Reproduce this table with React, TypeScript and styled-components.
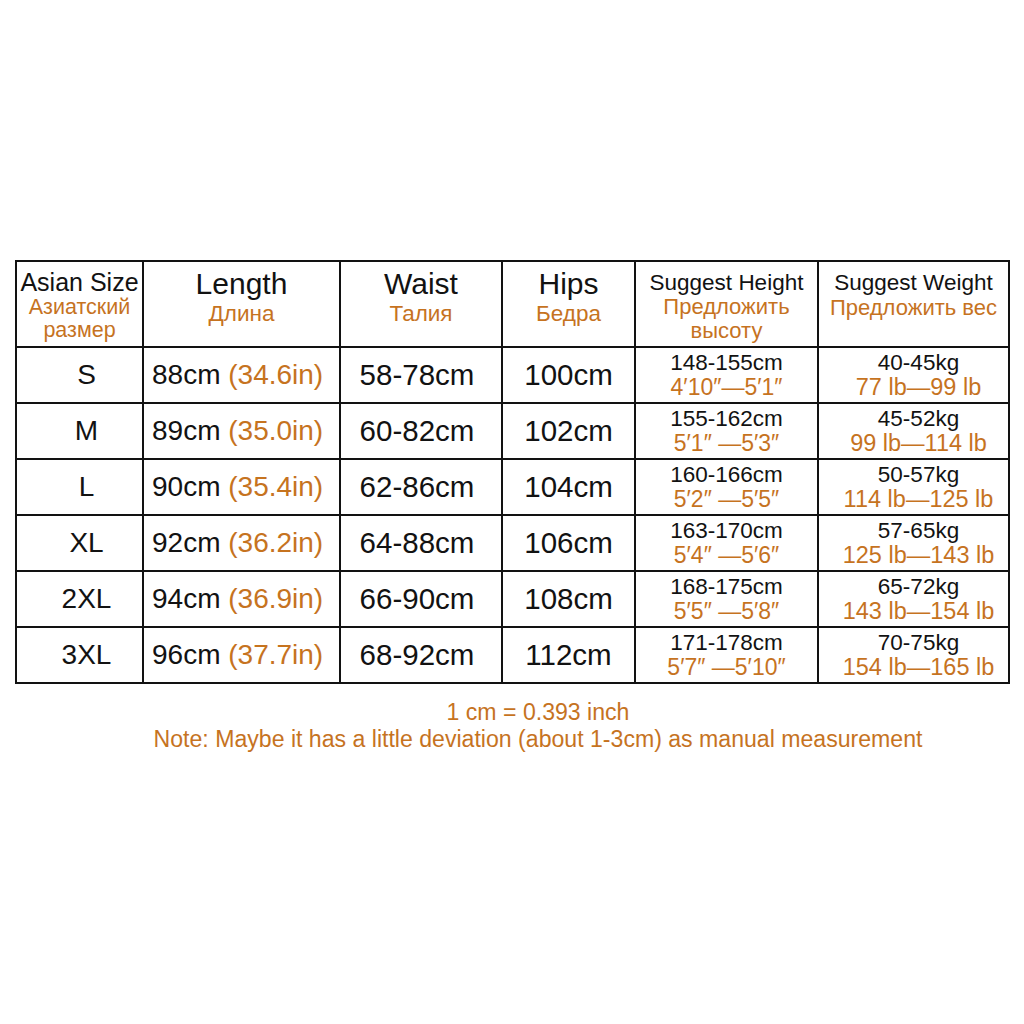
import React from "react";
import styled, { createGlobalStyle } from "styled-components";

const GlobalStyle = createGlobalStyle`
  html, body { margin: 0; padding: 0; background: #ffffff; }
  body { font-family: "Liberation Sans", Arial, sans-serif; color: #111111; }
`;

const ORANGE = "#c6731f";
const INK = "#121212";

const Page = styled.div`
  width: 1024px;
  height: 1024px;
  padding-top: 260px;
  box-sizing: border-box;
  display: flex;
  flex-direction: column;
`;

const Table = styled.div`
  margin-left: 15px;
  display: grid;
  grid-template-columns: 127px 197px 162px 133px 183px 191px;
  grid-template-rows: 86px repeat(6, 56px);
  width: fit-content;
  border-top: 2px solid ${INK};
  border-left: 2px solid ${INK};
`;

type Align = "start" | "center";

const Cell = styled.div<{ $align?: Align; $valign?: Align; $pl?: number; $pr?: number; $pt?: number }>`
  box-sizing: border-box;
  border-right: 2px solid ${INK};
  border-bottom: 2px solid ${INK};
  display: flex;
  flex-direction: column;
  align-items: ${(p) => (p.$align === "start" ? "flex-start" : "center")};
  justify-content: ${(p) => (p.$valign === "start" ? "flex-start" : "center")};
  padding-left: ${(p) => p.$pl ?? 0}px;
  padding-right: ${(p) => p.$pr ?? 0}px;
  padding-top: ${(p) => p.$pt ?? 0}px;
  white-space: nowrap;
  overflow: hidden;
`;

const Line = styled.div<{ $size: number; $lh: number; $orange?: boolean }>`
  font-size: ${(p) => p.$size}px;
  line-height: ${(p) => p.$lh}px;
  color: ${(p) => (p.$orange ? ORANGE : INK)};
  white-space: pre;
`;

const Accent = styled.span`
  color: ${ORANGE};
`;

const Footer = styled.div`
  margin-top: 15px;
  padding-left: 52px;
  display: flex;
  flex-direction: column;
  align-items: center;
  color: ${ORANGE};
  font-size: 23.1px;
  line-height: 27px;
`;

const rows = [
  { size: "S", len: "88cm", inch: "(34.6in)", waist: "58-78cm", hips: "100cm", h: "148-155cm", hi: "4′10″—5′1″", w: "40-45kg", wl: "77 lb—99 lb" },
  { size: "M", len: "89cm", inch: "(35.0in)", waist: "60-82cm", hips: "102cm", h: "155-162cm", hi: "5′1″ —5′3″", w: "45-52kg", wl: "99 lb—114 lb" },
  { size: "L", len: "90cm", inch: "(35.4in)", waist: "62-86cm", hips: "104cm", h: "160-166cm", hi: "5′2″ —5′5″", w: "50-57kg", wl: "114 lb—125 lb" },
  { size: "XL", len: "92cm", inch: "(36.2in)", waist: "64-88cm", hips: "106cm", h: "163-170cm", hi: "5′4″ —5′6″", w: "57-65kg", wl: "125 lb—143 lb" },
  { size: "2XL", len: "94cm", inch: "(36.9in)", waist: "66-90cm", hips: "108cm", h: "168-175cm", hi: "5′5″ —5′8″", w: "65-72kg", wl: "143 lb—154 lb" },
  { size: "3XL", len: "96cm", inch: "(37.7in)", waist: "68-92cm", hips: "112cm", h: "171-178cm", hi: "5′7″ —5′10″", w: "70-75kg", wl: "154 lb—165 lb" },
];

export default function App() {
  return (
    <>
      <GlobalStyle />
      <Page>
        <Table>
          <Cell $valign="start" $pt={7}>
            <Line $size={25} $lh={27}>Asian Size</Line>
            <Line $size={21.5} $lh={23} $orange>Азиатский</Line>
            <Line $size={21.5} $lh={23} $orange>размер</Line>
          </Cell>
          <Cell $valign="start" $pt={6}>
            <Line $size={30} $lh={31}>Length</Line>
            <Line $size={22.5} $lh={29} $orange>Длина</Line>
          </Cell>
          <Cell $valign="start" $pt={6}>
            <Line $size={30} $lh={31}>Waist</Line>
            <Line $size={22.5} $lh={29} $orange>Талия</Line>
          </Cell>
          <Cell $valign="start" $pt={6}>
            <Line $size={30} $lh={31}>Hips</Line>
            <Line $size={22.5} $lh={29} $orange>Бедра</Line>
          </Cell>
          <Cell $valign="start" $pt={8}>
            <Line $size={22.5} $lh={25}>Suggest Height</Line>
            <Line $size={22} $lh={24} $orange>Предложить</Line>
            <Line $size={22} $lh={24} $orange>высоту</Line>
          </Cell>
          <Cell $valign="start" $pt={8}>
            <Line $size={22.5} $lh={25}>Suggest Weight</Line>
            <Line $size={22} $lh={25} $orange>Предложить вес</Line>
          </Cell>

          {rows.map((r) => (
            <React.Fragment key={r.size}>
              <Cell $pl={14}>
                <Line $size={28} $lh={32}>{r.size}</Line>
              </Cell>
              <Cell $align="start" $pl={8}>
                <Line $size={28} $lh={32}>
                  {r.len} <Accent>{r.inch}</Accent>
                </Line>
              </Cell>
              <Cell $pr={8}>
                <Line $size={29.5} $lh={32}>{r.waist}</Line>
              </Cell>
              <Cell>
                <Line $size={29.5} $lh={32}>{r.hips}</Line>
              </Cell>
              <Cell>
                <Line $size={22.5} $lh={25}>{r.h}</Line>
                <Line $size={23} $lh={25} $orange>{r.hi}</Line>
              </Cell>
              <Cell $pl={10}>
                <Line $size={22.5} $lh={25}>{r.w}</Line>
                <Line $size={23.5} $lh={25} $orange>{r.wl}</Line>
              </Cell>
            </React.Fragment>
          ))}
        </Table>
        <Footer>
          <div>1 cm = 0.393 inch</div>
          <div>Note: Maybe it has a little deviation (about 1-3cm) as manual measurement</div>
        </Footer>
      </Page>
    </>
  );
}
